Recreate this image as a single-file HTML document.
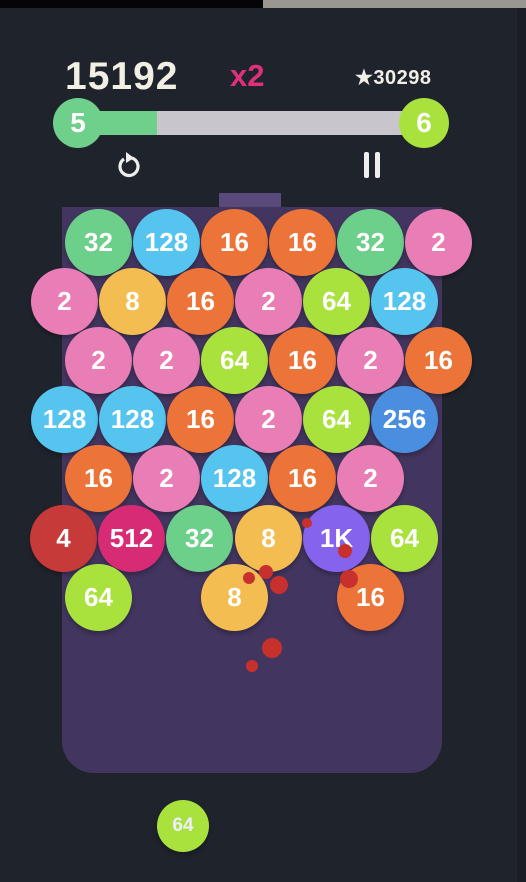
<!DOCTYPE html>
<html><head><style>
*{margin:0;padding:0;box-sizing:border-box}
body{width:526px;height:882px;background:#1f232c;position:relative;overflow:hidden;font-family:"Liberation Sans",sans-serif;font-weight:bold;color:#fff}
.a{position:absolute}
.b{position:absolute;width:67px;height:67px;border-radius:50%;display:flex;align-items:center;justify-content:center;font-size:26px;color:#fff;box-shadow:0 3px 4px rgba(0,0,0,.25)}
.g{background:#6ccf8a}.bl{background:#55c4ef}.o{background:#ec7438}.p{background:#e97db5}.y{background:#f4bd52}.l{background:#a9e23d}.r{background:#c63a3a}.m{background:#d82b76}.pu{background:#8663ec}.db{background:#4a8ee0}
.d{position:absolute;border-radius:50%;background:#c8302e}
</style></head><body>
<div class="a" style="left:0;top:0;width:263px;height:8px;background:#050507"></div>
<div class="a" style="left:263px;top:0;width:263px;height:8px;background:#9a9690"></div>
<div class="a" style="left:517px;top:8px;width:9px;height:874px;background:#1a1d24"></div>
<div class="a" style="left:65px;top:55px;font-size:39px;color:#f2efe4;letter-spacing:1px">15192</div>
<div class="a" style="left:230px;top:58px;font-size:31px;color:#e0307a">x2</div>
<div class="a" style="left:355px;top:65px;font-size:20px;color:#f0eee6;letter-spacing:0.5px">★30298</div>
<div class="a" style="left:80px;top:111px;width:340px;height:24px;background:#c8c6cc"></div>
<div class="a" style="left:80px;top:111px;width:77px;height:24px;background:#6fd08c"></div>
<div class="a" style="left:53px;top:98px;width:50px;height:50px;border-radius:50%;background:#6fd08c;display:flex;align-items:center;justify-content:center;font-size:28px">5</div>
<div class="a" style="left:399px;top:98px;width:50px;height:50px;border-radius:50%;background:#a9e23d;display:flex;align-items:center;justify-content:center;font-size:28px">6</div>
<svg class="a" style="left:114px;top:149px" width="30" height="32" viewBox="0 0 30 32"><path d="M10 10 A9 9 0 1 0 18 9" fill="none" stroke="#eee" stroke-width="3.2"/><path d="M12 3 L20 9 L12 14 Z" fill="#eee"/></svg>
<div class="a" style="left:364px;top:152px;width:5px;height:26px;background:#eee;border-radius:2px"></div>
<div class="a" style="left:375px;top:152px;width:5px;height:26px;background:#eee;border-radius:2px"></div>
<div class="a" style="left:219px;top:193px;width:62px;height:16px;background:#5a4a7b"></div>
<div class="a" style="left:62px;top:207px;width:380px;height:566px;background:#42355f;border-radius:0 0 32px 32px"></div>
<div class="b g" style="left:65px;top:209px">32</div>
<div class="b bl" style="left:133px;top:209px">128</div>
<div class="b o" style="left:201px;top:209px">16</div>
<div class="b o" style="left:269px;top:209px">16</div>
<div class="b g" style="left:337px;top:209px">32</div>
<div class="b p" style="left:405px;top:209px">2</div>
<div class="b p" style="left:31px;top:268px">2</div>
<div class="b y" style="left:99px;top:268px">8</div>
<div class="b o" style="left:167px;top:268px">16</div>
<div class="b p" style="left:235px;top:268px">2</div>
<div class="b l" style="left:303px;top:268px">64</div>
<div class="b bl" style="left:371px;top:268px">128</div>
<div class="b p" style="left:65px;top:327px">2</div>
<div class="b p" style="left:133px;top:327px">2</div>
<div class="b l" style="left:201px;top:327px">64</div>
<div class="b o" style="left:269px;top:327px">16</div>
<div class="b p" style="left:337px;top:327px">2</div>
<div class="b o" style="left:405px;top:327px">16</div>
<div class="b bl" style="left:31px;top:386px">128</div>
<div class="b bl" style="left:99px;top:386px">128</div>
<div class="b o" style="left:167px;top:386px">16</div>
<div class="b p" style="left:235px;top:386px">2</div>
<div class="b l" style="left:303px;top:386px">64</div>
<div class="b db" style="left:371px;top:386px">256</div>
<div class="b o" style="left:65px;top:445px">16</div>
<div class="b p" style="left:133px;top:445px">2</div>
<div class="b bl" style="left:201px;top:445px">128</div>
<div class="b o" style="left:269px;top:445px">16</div>
<div class="b p" style="left:337px;top:445px">2</div>
<div class="b r" style="left:30px;top:505px">4</div>
<div class="b m" style="left:98px;top:505px">512</div>
<div class="b g" style="left:166px;top:505px">32</div>
<div class="b y" style="left:235px;top:505px">8</div>
<div class="b pu" style="left:303px;top:505px">1K</div>
<div class="b l" style="left:371px;top:505px">64</div>
<div class="b l" style="left:65px;top:564px">64</div>
<div class="b y" style="left:201px;top:564px">8</div>
<div class="b o" style="left:337px;top:564px">16</div>
<div class="d" style="left:302px;top:518px;width:10px;height:10px"></div>
<div class="d" style="left:338px;top:544px;width:14px;height:14px"></div>
<div class="d" style="left:259px;top:565px;width:14px;height:14px"></div>
<div class="d" style="left:270px;top:576px;width:18px;height:18px"></div>
<div class="d" style="left:243px;top:572px;width:12px;height:12px"></div>
<div class="d" style="left:340px;top:570px;width:18px;height:18px"></div>
<div class="d" style="left:262px;top:638px;width:20px;height:20px"></div>
<div class="d" style="left:246px;top:660px;width:12px;height:12px"></div>
<div class="b l" style="left:157px;top:800px;width:52px;height:52px;font-size:19px;color:#eef">64</div>
</body></html>
